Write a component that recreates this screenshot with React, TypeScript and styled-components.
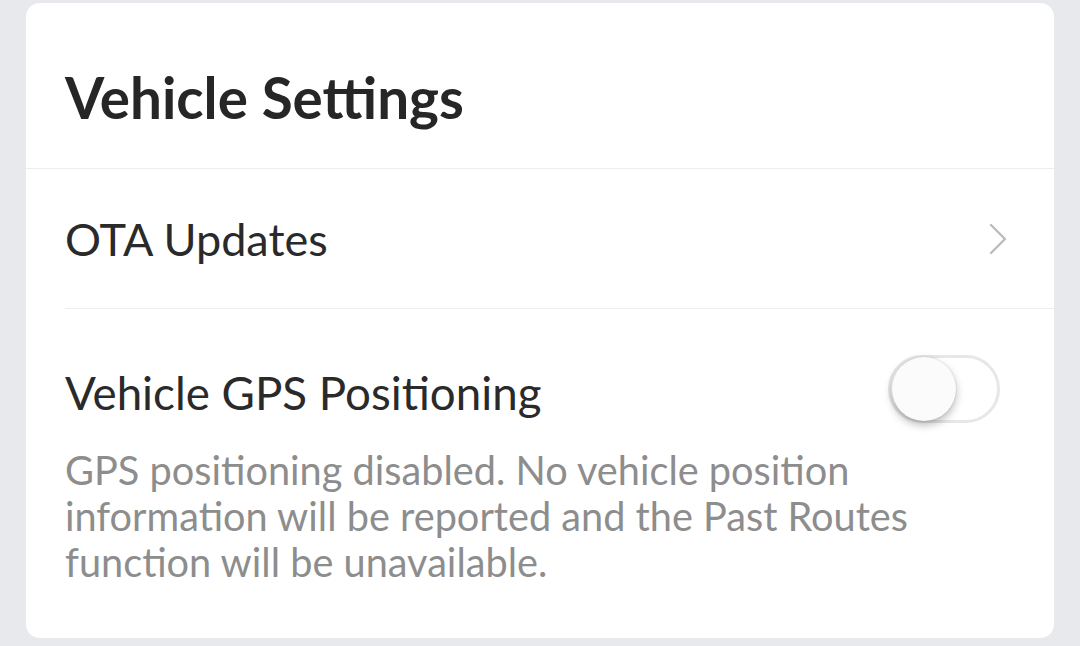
import React from "react";
import styled, { createGlobalStyle } from "styled-components";

const Global = createGlobalStyle`
  html, body { margin: 0; padding: 0; background: #e7e9ed; }
  body { font-family: Lato, "Noto Sans", sans-serif; }
`;

const Page = styled.div`
  width: 1080px;
  height: 646px;
  box-sizing: border-box;
  padding: 3px 26px 8px 26px;
  background: #e7e9ed;
`;

const Card = styled.div`
  background: #ffffff;
  border-radius: 14px;
  height: 635px;
  box-sizing: border-box;
  overflow: hidden;
`;

const Header = styled.div`
  height: 166px;
  box-sizing: border-box;
  padding: 61px 0 0 39px;
  border-bottom: 1px solid #eeeeee;
`;

const Title = styled.h1`
  margin: 0;
  font-family: Lato, sans-serif;
  font-weight: 700;
  font-size: 56.6px;
  line-height: 1.2;
  color: #262626;
`;

const Row = styled.div`
  margin-left: 39px;
  height: 140px;
  box-sizing: border-box;
  display: flex;
  align-items: center;
  justify-content: space-between;
  border-bottom: 1px solid #eeeeee;
  padding-right: 47px;
`;

const RowLabel = styled.span<{ $offset?: number; $size?: number }>`
  font-size: ${(p) => p.$size ?? 46}px;
  line-height: 1.2;
  color: #2a2a2a;
  font-family: Lato, sans-serif;
  margin-top: ${(p) => p.$offset ?? 0}px;
`;

const Section = styled.div`
  padding: 46px 54px 0 39px;
`;

const ToggleLine = styled.div`
  display: flex;
  align-items: flex-start;
  justify-content: space-between;
`;

const Desc = styled.p`
  margin: 24px 0 0 0;
  max-width: 880px;
  font-size: 39.7px;
  line-height: 46px;
  color: #8d8d8d;
  font-family: Lato, sans-serif;
`;

const Track = styled.div`
  width: 112px;
  height: 68px;
  box-sizing: border-box;
  border: 3px solid #e7e7e7;
  border-radius: 34px;
  position: relative;
  background: #fff;
`;

const Knob = styled.div`
  position: absolute;
  left: 1px;
  top: -1px;
  width: 64px;
  height: 64px;
  border-radius: 50%;
  background: #fbfbfb;
  box-shadow: 0 4px 8px rgba(0, 0, 0, 0.28), 0 0 2px rgba(0, 0, 0, 0.15);
`;

const Chevron = () => (
  <svg width="18" height="32" viewBox="0 0 18 32">
    <path d="M2 2 L16 16 L2 30" fill="none" stroke="#bcbcbc" strokeWidth="2.4" strokeLinecap="round" strokeLinejoin="round" />
  </svg>
);

export default function App() {
  return (
    <>
      <Global />
      <Page>
        <Card>
          <Header>
            <Title>Vehicle Settings</Title>
          </Header>
          <Row>
            <RowLabel $size={45}>OTA Updates</RowLabel>
            <Chevron />
          </Row>
          <Section>
            <ToggleLine>
              <RowLabel $offset={11} $size={45.7}>Vehicle GPS Positioning</RowLabel>
              <Track>
                <Knob />
              </Track>
            </ToggleLine>
            <Desc>
              GPS positioning disabled. No vehicle position information will be reported and the Past Routes function will be unavailable.
            </Desc>
          </Section>
        </Card>
      </Page>
    </>
  );
}
